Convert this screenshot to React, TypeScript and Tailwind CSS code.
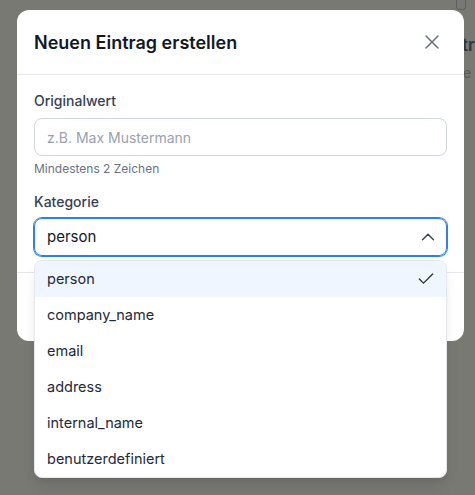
import { X, ChevronUp, Check } from "lucide-react";

const options = ["person", "company_name", "email", "address", "internal_name", "benutzerdefiniert"];

export default function App() {
  const selected = "person";

  return (
    <div className="relative h-[495px] w-[475px] overflow-hidden bg-[#797974] font-['Inter',sans-serif]">
      {/* Seite im Hintergrund, abgedunkelt */}
      <div className="absolute left-[456px] top-0 h-[10px] w-[10px] rounded-b-sm border border-t-0 border-[#606060]" />
      <span className="absolute left-[462px] top-[33px] text-[17px] font-semibold text-[#2e3440]">tr</span>
      <span className="absolute left-[463px] top-[62px] text-[14px] text-[#5a5a58]">e</span>

      <div className="relative ml-[17px] mt-[10px] w-[447px] rounded-xl bg-white">
        <div className="flex h-[65px] items-center justify-between border-b border-gray-200 pl-[17px] pr-[20px]">
          <h2 className="text-[18px] font-semibold text-[#111827]">Neuen Eintrag erstellen</h2>
          <X size={24} strokeWidth={1.5} className="text-gray-500" />
        </div>

        <div className="px-[17px] pb-4 pt-4">
          <label className="block text-sm font-medium text-gray-700">Originalwert</label>
          <input
            className="mt-[7px] block h-[38px] w-full rounded-lg border border-gray-300 px-3 text-sm text-gray-900 outline-none placeholder:text-gray-400"
            placeholder="z.B. Max Mustermann"
          />
          <p className="mt-[5px] text-xs text-gray-500">Mindestens 2 Zeichen</p>

          <label className="mt-[15px] block text-sm font-medium text-gray-700">Kategorie</label>
          <div className="relative mt-[6px]">
            <div className="flex h-[38px] w-full items-center justify-between rounded-lg border border-blue-500 pl-3 pr-[7px] ring-1 ring-blue-500">
              <span className="text-[15px] text-gray-900">{selected}</span>
              <ChevronUp size={22} strokeWidth={1.5} className="text-gray-700" />
            </div>

            <ul className="absolute left-0 right-0 top-[42px] z-10 overflow-hidden rounded-lg border border-gray-200 bg-white shadow-lg">
              {options.map((opt) => (
                <li
                  key={opt}
                  className={`flex h-[36px] items-center justify-between pl-3 pr-[10px] text-[14.5px] text-gray-800 ${
                    opt === selected ? "bg-blue-50" : ""
                  }`}
                >
                  <span>{opt}</span>
                  {opt === selected && <Check size={20} strokeWidth={1.5} className="text-gray-800" />}
                </li>
              ))}
            </ul>
          </div>
        </div>

        <div className="h-[69px] border-t border-gray-200" />
      </div>
    </div>
  );
}
